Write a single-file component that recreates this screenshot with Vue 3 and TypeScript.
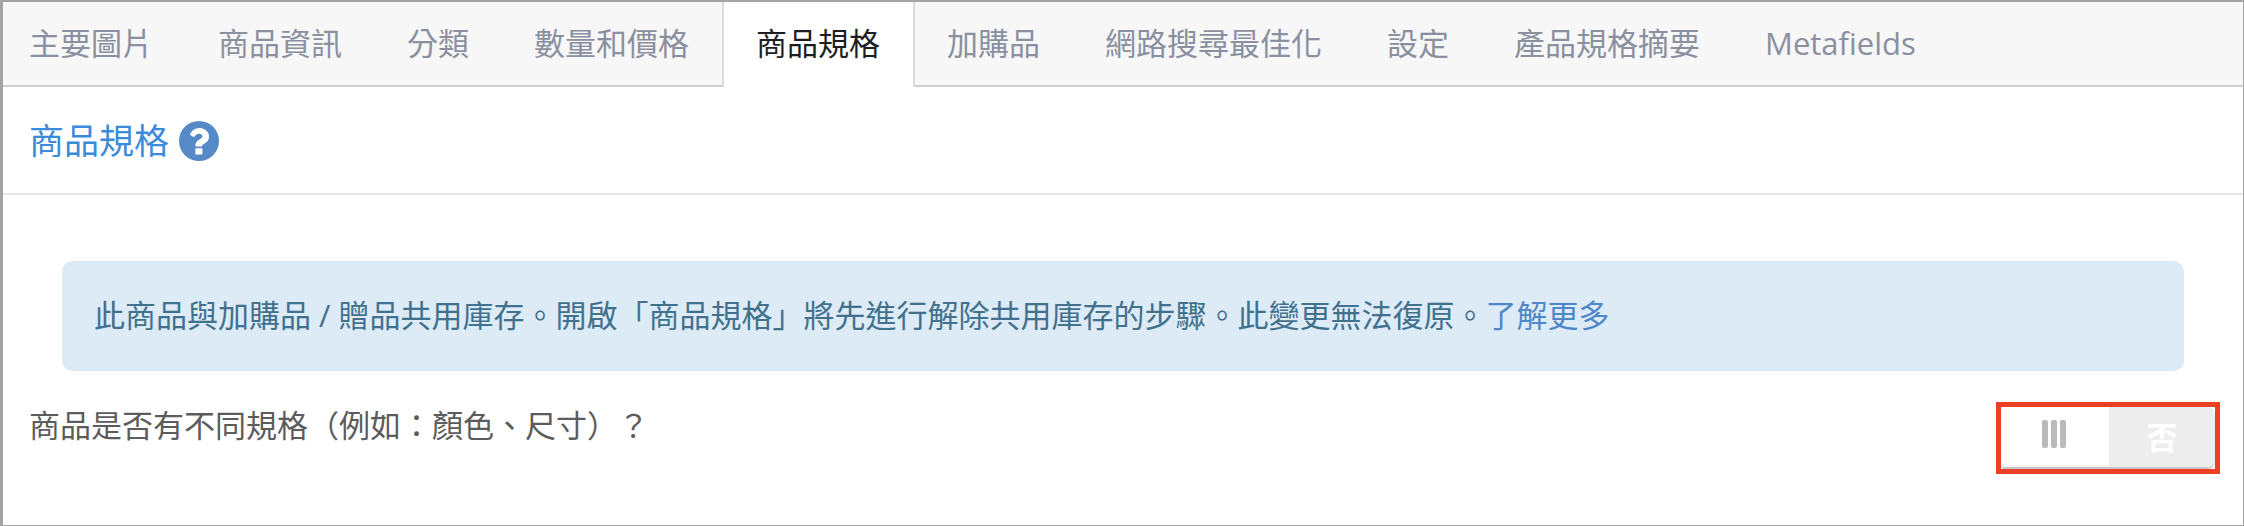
<script setup lang="ts">
import { ref } from 'vue'

const tabs: string[] = [
  '主要圖片',
  '商品資訊',
  '分類',
  '數量和價格',
  '商品規格',
  '加購品',
  '網路搜尋最佳化',
  '設定',
  '產品規格摘要',
  'Metafields',
]
const activeTab = ref('商品規格')
const hasVariations = ref(false)
</script>

<template>
  <main class="panel">
    <div class="tabs" role="tablist">
      <button
        v-for="tab in tabs"
        :key="tab"
        type="button"
        role="tab"
        class="tab"
        :class="{ active: tab === activeTab }"
        :aria-selected="tab === activeTab"
        @click="activeTab = tab"
      >{{ tab }}</button>
    </div>

    <header class="heading">
      <h1>商品規格</h1>
      <a class="help" href="#" aria-label="商品規格">
        <svg viewBox="0 0 40 40" aria-hidden="true">
          <circle cx="20" cy="20" r="20" fill="#558ac7" />
          <path
            d="M11 13.2C13.1 9.2 16.2 7.1 20.5 7.1C25.5 7.1 30 10.7 30 15.5C30 20 27 21.6 24.8 22.9C23.6 23.6 23 24.4 23 25.3V25.5H16.5V24.3C16.5 20.8 18.9 19.3 20.9 18.2C22.5 17.3 23.5 16.6 23.5 15.3C23.5 13.7 22 12.8 20.2 12.8C18 12.8 16.9 13.7 15.2 15.9Q15 16.2 14.6 15.9L11.2 13.7Q10.9 13.5 11 13.2Z"
            fill="#fff"
          />
          <rect x="16.4" y="27.2" width="7" height="6.4" rx="0.6" fill="#fff" />
        </svg>
      </a>
    </header>

    <section class="content">
      <p class="alert" role="status">此商品與加購品 / 贈品共用庫存。開啟「商品規格」將先進行解除共用庫存的步驟。此變更無法復原。<a href="#">了解更多</a></p>
      <div class="setting">
        <label id="variation-label" for="variation-switch">商品是否有不同規格（例如：顏色、尺寸）？</label>
        <div class="highlight">
          <button
            id="variation-switch"
            type="button"
            role="switch"
            class="switch"
            aria-labelledby="variation-label"
            :aria-checked="hasVariations"
            @click="hasVariations = !hasVariations"
          >
            <span class="handle"><i></i><i></i><i></i></span>
            <span class="state">{{ hasVariations ? '是' : '否' }}</span>
          </button>
        </div>
      </div>
    </section>
  </main>
</template>

<style>
body {
  margin: 0;
}
</style>

<style scoped>
.panel {
  box-sizing: border-box;
  min-height: 100vh;
  border: 1px solid #a4a4a4;
  border-top-width: 2px;
  border-left-width: 3px;
  background: #fff;
  color: #5c5c5c;
  font-family: "Open Sans", "Noto Sans CJK TC", sans-serif;
  font-size: 31px;
  line-height: 42px;
}

.tabs {
  display: flex;
  padding-right: 32px;
  background: #f7f7f7;
  box-shadow: inset 0 -2px #cfcfcf;
}

.tab {
  margin: 0;
  padding: 20px 33px 23px 32px;
  border: 0;
  background: none;
  color: #8a90a0;
  font: inherit;
  white-space: nowrap;
  cursor: pointer;
}

.tab:first-child {
  padding-left: 26px;
}

.tab.active {
  border: solid #dcdcdc;
  border-width: 0 2px;
  background: #fff;
  color: #1d1e22;
}

.heading {
  display: flex;
  align-items: center;
  gap: 10px;
  height: 106px;
  padding: 2px 26px 0;
  box-sizing: border-box;
  height: 108px;
  border-bottom: 2px solid #e6e6e6;
}

h1 {
  margin: 0;
  color: #3c8bda;
  font-size: 35px;
  font-weight: 400;
  line-height: 48px;
}

.help,
.help svg {
  display: block;
  width: 40px;
  height: 40px;
}

.content {
  padding: 66px 23px 50px 26px;
}

.alert {
  margin: 0 36px 0 33px;
  padding: 33px 32px 35px;
  border-radius: 10px;
  background: #dcebf6;
  color: #42718e;
}

.alert a {
  color: #4f87c9;
  text-decoration: none;
}

.setting {
  display: flex;
  align-items: flex-start;
  justify-content: space-between;
  padding-top: 31px;
}

.setting label {
  padding-top: 2px;
}

.highlight {
  border: 5px solid #ec4025;
  background: #fff;
}

.switch {
  display: flex;
  width: 214px;
  height: 62px;
  padding: 0;
  border: 0;
  border-bottom: 2px solid #c6c6c6;
  border-radius: 0 8px 8px 4px;
  overflow: hidden;
  background: #fff;
  font: inherit;
  cursor: pointer;
}

.handle,
.state {
  box-sizing: border-box;
  display: flex;
  flex: 1;
  align-items: center;
  justify-content: center;
  height: 60px;
}

.handle {
  gap: 3px;
  padding-right: 2px;
  height: 54px;
}

.handle i {
  width: 6px;
  height: 28px;
  border-radius: 2px;
  background: #bababa;
}

.state {
  background: #ededed;
  color: #fff;
  font-weight: 700;
}
</style>
